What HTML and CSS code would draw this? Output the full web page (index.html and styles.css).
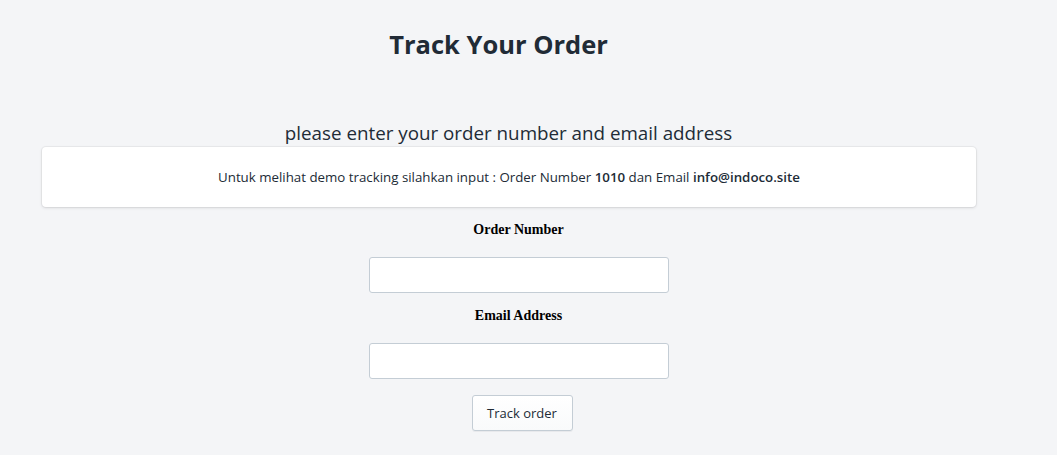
FILE: index.html
```html
<!DOCTYPE html>
<html>
<head>
<meta charset="utf-8">
<link rel="stylesheet" href="styles.css">
</head>
<body>
<div class="page">
  <h1 class="title">Track Your Order</h1>
  <p class="subtitle">please enter your order number and email address</p>
  <div class="card"><span class="card-text">Untuk melihat demo tracking silahkan input : Order Number <b>1010</b> dan Email <b>info@indoco.site</b></span></div>
  <form class="form">
    <label class="label">Order Number</label>
    <input class="input" type="text">
    <label class="label">Email Address</label>
    <input class="input" type="text">
    <button class="btn" type="button">Track order</button>
  </form>
</div>
</body>
</html>
```

FILE: styles.css
```css
html, body { margin: 0; padding: 0; }
body {
  background: #f4f5f7;
  font-family: "Open Sans", "Noto Sans", sans-serif;
  color: #212b36;
  width: 1057px;
  height: 455px;
  overflow: hidden;
}
.page { padding-top: 26px; }
.title {
  margin: 0;
  font-size: 25.5px;
  font-weight: 700;
  line-height: 36px;
  text-align: center;
  padding-right: 60px;
}
.subtitle {
  margin: 57px 0 0;
  font-size: 18.8px;
  line-height: 28px;
  text-align: center;
  padding-right: 40px;
}
.card {
  margin: 0 0 0 42px;
  width: 934px;
  height: 60px;
  box-sizing: border-box;
  background: #fff;
  border-radius: 4px;
  box-shadow: 0 0 0 1px rgba(63,63,68,0.05), 0 1px 3px 0 rgba(63,63,68,0.15);
  display: flex;
  align-items: center;
  justify-content: center;
  font-size: 13.3px;
  color: #212b36;
}
.card b { font-weight: 600; }
.form {
  display: flex;
  flex-direction: column;
  align-items: center;
  padding-right: 20px;
  margin-top: 13px;
}
.label {
  font-family: "Liberation Serif", serif;
  font-weight: 700;
  font-size: 14px;
  line-height: 20px;
  color: #000;
  margin-bottom: 17px;
}
.input {
  width: 300px;
  height: 36px;
  box-sizing: border-box;
  border: 1px solid #c4cdd5;
  border-radius: 3px;
  background: #fff;
  margin: 0 0 13px;
}
.btn {
  margin-top: 3px;
  margin-left: 7px;
  width: 101px;
  height: 36px;
  box-sizing: border-box;
  background: linear-gradient(#fff, #f9fafb);
  border: 1px solid #c4cdd5;
  border-radius: 3px;
  box-shadow: 0 1px 0 rgba(22,29,37,0.05);
  font-family: "Open Sans", sans-serif;
  font-size: 13px;
  color: #212b36;
}
```
